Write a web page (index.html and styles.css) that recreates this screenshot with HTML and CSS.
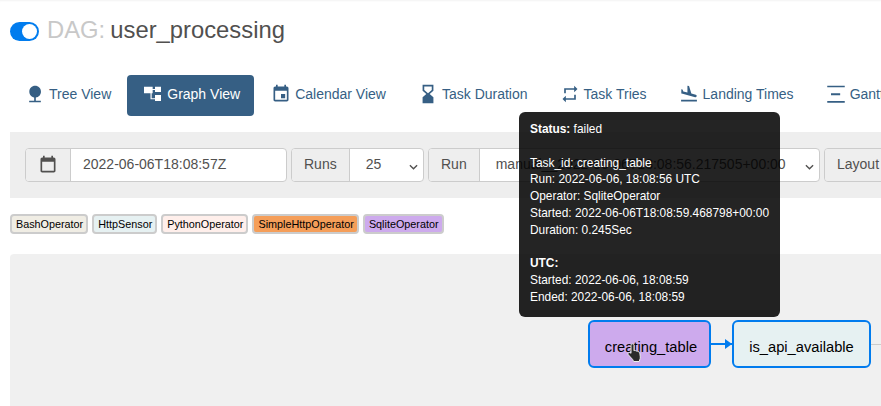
FILE: index.html
```html
<!DOCTYPE html>
<html>
<head lang="en">
    <meta charset="UTF-8">
    <title>user_processing - Graph View</title>
    <link rel="stylesheet" href="styles.css">
</head>
<body>
    <div class="page">
        <h4 class="title">
            <span class="toggle"><span class="knob"></span></span>
            <span class="title-text"><span class="dag-label">DAG:</span> user_processing</span>
        </h4>

        <ul class="tabs">
            <li class="tab"><svg class="ico" viewBox="0 0 24 24"><path d="M13 16.12c3.47-.41 6.17-3.36 6.17-6.95 0-3.87-3.13-7-7-7s-7 3.13-7 7c0 3.47 2.52 6.34 5.83 6.89V20H5v2h14v-2h-6v-3.88z"/></svg>Tree View</li>
            <li class="tab active"><svg class="ico" viewBox="0 0 24 24"><path d="M1.200 3.200h10.400v8H1.200zM14.400 3.200h7.200v6.400h-7.200zM14.400 13.200h7.200v7.200h-7.200zM11.600 6h2.800v1.200h-2.800zM9 11.200h1.400V17h4v1.400H9z"/></svg>Graph View</li>
            <li class="tab"><svg class="ico" viewBox="0 0 24 24"><path d="M17 12h-5v5h5v-5zM16 1v2H8V1H6v2H5c-1.11 0-1.99.9-1.99 2L3 19c0 1.1.89 2 2 2h14c1.1 0 2-.9 2-2V5c0-1.1-.9-2-2-2h-1V1h-2zm3 18H5V8h14v11z"/></svg>Calendar View</li>
            <li class="tab"><svg class="ico" viewBox="0 0 24 24"><path d="M5.500 1v7l4.500 4-4.500 4v7h13v-7L14 12l4.500-4V1H5.500zm2 2h9v4.200l-4.500 4-4.500-4V3z"/></svg>Task Duration</li>
            <li class="tab"><svg class="ico" viewBox="0 0 24 24"><path d="M7 7h10v3l4-4-4-4v3H5v6h2V7zm10 10H7v-3l-4 4 4 4v-3h12v-6h-2v4z"/></svg>Task Tries</li>
            <li class="tab"><svg class="ico" viewBox="0 0 24 24"><path d="M2.500 19h19v2h-19zm7.180-5.730l4.350 1.160 5.310 1.420c.8.210 1.620-.26 1.840-1.060.21-.8-.26-1.620-1.060-1.840l-5.310-1.420-2.760-9.020L10.120 2v8.280L5.150 8.950l-.93-2.320-1.450-.39v5.170l1.600.43 5.310 1.430z"/></svg>Landing Times</li>
            <li class="tab"><svg class="ico" viewBox="0 0 24 24"><path d="M1.500 2h21v2h-21zM1.500 20.500h21v2h-21zM6 11h11v2.400H6z"/></svg>Gantt</li>
        </ul>

        <div class="filters">
            <div class="group group-date">
                <span class="addon addon-cal"><svg class="cal" viewBox="0 0 24 24"><path d="M19 3h-1V1h-2v2H8V1H6v2H5c-1.100 0-2 .9-2 2v14c0 1.100.9 2 2 2h14c1.100 0 2-.9 2-2V5c0-1.100-.9-2-2-2zm0 16H5V8h14v11z"/></svg></span>
                <span class="field">2022-06-06T18:08:57Z</span>
            </div>
            <div class="group group-runs">
                <span class="addon">Runs</span>
                <span class="field field-select">25<svg class="caret" viewBox="0 0 10 6"><path d="M1 1l4 4 4-4"/></svg></span>
            </div>
            <div class="group group-run">
                <span class="addon">Run</span>
                <span class="field field-select">manual__2022-06-06T18:08:56.217505+00:00<svg class="caret" viewBox="0 0 10 6"><path d="M1 1l4 4 4-4"/></svg></span>
            </div>
            <div class="group group-layout">
                <span class="addon">Layout</span>
            </div>
        </div>

        <div class="legend">
            <span class="op op-bash">BashOperator</span>
            <span class="op op-http">HttpSensor</span>
            <span class="op op-python">PythonOperator</span>
            <span class="op op-simple">SimpleHttpOperator</span>
            <span class="op op-sqlite">SqliteOperator</span>
        </div>

        <div class="graph">
            <div class="node node-sqlite">creating_table</div>
            <div class="edge"></div>
            <div class="node node-http">is_api_available</div>
            <div class="edge-out"></div>
        </div>

        <div class="tooltip">
            <b>Status:</b> failed<br><br>
            Task_id: creating_table<br>
            Run: 2022-06-06, 18:08:56 UTC<br>
            Operator: SqliteOperator<br>
            Started: 2022-06-06T18:08:59.468798+00:00<br>
            Duration: 0.245Sec<br><br>
            <b>UTC:</b><br>
            Started: 2022-06-06, 18:08:59<br>
            Ended: 2022-06-06, 18:08:59
        </div>

        <svg class="hand" viewBox="0 0 16 20"><path d="M5.500.8c.9 0 1.500.6 1.500 1.500v5.500c.6-.5 1.700-.4 2.100.4.700-.4 1.600-.1 1.900.6.800-.3 1.700.2 1.800 1.100l.5 4c.1 1-.1 2-.6 2.900l-.4 1.700H6.600l-1-2.100L1.500 12c-.7-.8-.6-1.800.1-2.300.7-.4 1.500-.2 2.400.6V2.300c0-.9.600-1.500 1.500-1.500z" fill="#2b2b2b" stroke="#eee" stroke-width="1"/></svg>
    </div>
</body>
</html>
```

FILE: styles.css
```css
html, body{
    margin: 0;
    padding: 0;
    background: #fff;
}
.page{
    position: relative;
    width: 881px;
    height: 406px;
    overflow: hidden;
    font-family: "Liberation Sans", Arial, sans-serif;
    font-size: 14px;
    color: #51504f;
    box-shadow: inset 0 2px 2px -1px rgba(0,0,0,.05);
}
.title{
    display: flex;
    align-items: center;
    gap: 8px;
    margin: 0;
    padding: 15px 10px 0;
    height: 32px;
    font-size: 23.8px;
    font-weight: normal;
    line-height: 32px;
    white-space: nowrap;
}
.title-text{
    padding-bottom: 2px;
    word-spacing: -1.5px;
}
.dag-label{
    color: #c8c8c8;
}
.toggle{
    display: flex;
    align-items: center;
    justify-content: flex-end;
    width: 29px;
    height: 19px;
    padding: 0 2px;
    box-sizing: border-box;
    border-radius: 10px;
    background: #017cee;
}
.knob{
    width: 15px;
    height: 15px;
    border-radius: 50%;
    background: #fff;
}

.tabs{
    display: flex;
    margin: 28px 0 0;
    padding: 0 0 0 7px;
    list-style: none;
    white-space: nowrap;
}
.tab{
    display: flex;
    flex: none;
    align-items: center;
    gap: 4px;
    height: 41px;
    box-sizing: border-box;
    padding: 0 14px 3px 16px;
    margin-left: 2px;
    color: #365f84;
    border-radius: 4px;
}
.tab.active{
    margin-right: -1px;
    background: #365f84;
    color: #fff;
}
.ico{
    width: 20px;
    height: 20px;
    fill: currentColor;
    flex: none;
}

.filters{
    display: flex;
    gap: 4px;
    margin: 16px 0 0 10px;
    padding: 16px 15px;
    height: 34px;
    background: #eee;
    white-space: nowrap;
}
.group{
    display: flex;
    flex: none;
    height: 34px;
    box-sizing: border-box;
    border: 1px solid #ccc;
    border-radius: 4px;
    background: #fff;
}
.group-date{ width: 262px; }
.group-runs{ width: 133px; }
.group-run{ width: 392px; }
.group-layout{ width: 90px; background: #eee; }
.addon{
    display: flex;
    align-items: center;
    padding: 0 12px 2px;
    background: #eee;
    border-right: 1px solid #ccc;
    border-radius: 3px 0 0 3px;
}
.group-layout .addon{
    border-right: none;
}
.addon-cal{
    width: 45px;
    padding: 0;
    justify-content: center;
    box-sizing: border-box;
}
.cal{
    width: 20px;
    height: 20px;
    fill: #51504f;
}
.field{
    display: flex;
    align-items: center;
    flex: 1;
    padding: 0 12px 2px;
}
.field-select{
    justify-content: space-between;
    padding: 0 5px 2px 16px;
}
.caret{
    width: 9px;
    height: 6px;
    margin-top: 5px;
    flex: none;
    fill: none;
    stroke: #51504f;
    stroke-width: 1.500;
}

.legend{
    display: flex;
    gap: 4px;
    margin: 16px 0 0 10px;
    height: 20px;
}
.op{
    display: block;
    height: 16px;
    padding: 0 3px 0 4px;
    border: 2px solid #ccc;
    border-radius: 4px;
    font-size: 10.8px;
    line-height: 16px;
    color: #000;
}
.op-bash{ background: #f0ede4; }
.op-http{ background: #e6f1f2; }
.op-python{ background: #ffefeb; }
.op-simple{ background: #f59e59; }
.op-sqlite{ background: #cdaaed; }

.graph{
    display: flex;
    align-items: flex-start;
    margin: 20px 0 0 10px;
    padding: 66px 0 0 578px;
    height: 200px;
    background: #f0f0f0;
    border-radius: 4px 0 0 0;
}
.node{
    flex: none;
    height: 48px;
    box-sizing: border-box;
    border: 2px solid #017cee;
    border-radius: 6px;
    font-size: 14.7px;
    line-height: 50px;
    text-align: center;
    color: #000;
}
.node-sqlite{ width: 123px; padding-left: 3px; background: #cdaaed; }
.node-http{ width: 139px; background: #e6f1f2; }
.edge{
    position: relative;
    flex: none;
    width: 21px;
    height: 2px;
    margin-top: 23px;
    background: #017cee;
}
.edge::after{
    content: "";
    position: absolute;
    right: 0;
    top: -4px;
    border-left: 7px solid #017cee;
    border-top: 5px solid transparent;
    border-bottom: 5px solid transparent;
}
.edge-out{
    flex: none;
    width: 10px;
    height: 1px;
    margin-top: 24px;
    background: #ccc;
}

.tooltip{
    position: absolute;
    left: 519px;
    top: 112px;
    width: 261px;
    height: 205px;
    padding: 9px 11px;
    box-sizing: border-box;
    border-radius: 6px;
    background: rgba(0,0,0,.86);
    color: #fff;
    font-size: 11.9px;
    line-height: 16.8px;
    white-space: nowrap;
}
.hand{
    position: absolute;
    left: 627px;
    top: 343px;
    width: 16px;
    height: 20px;
}
```
